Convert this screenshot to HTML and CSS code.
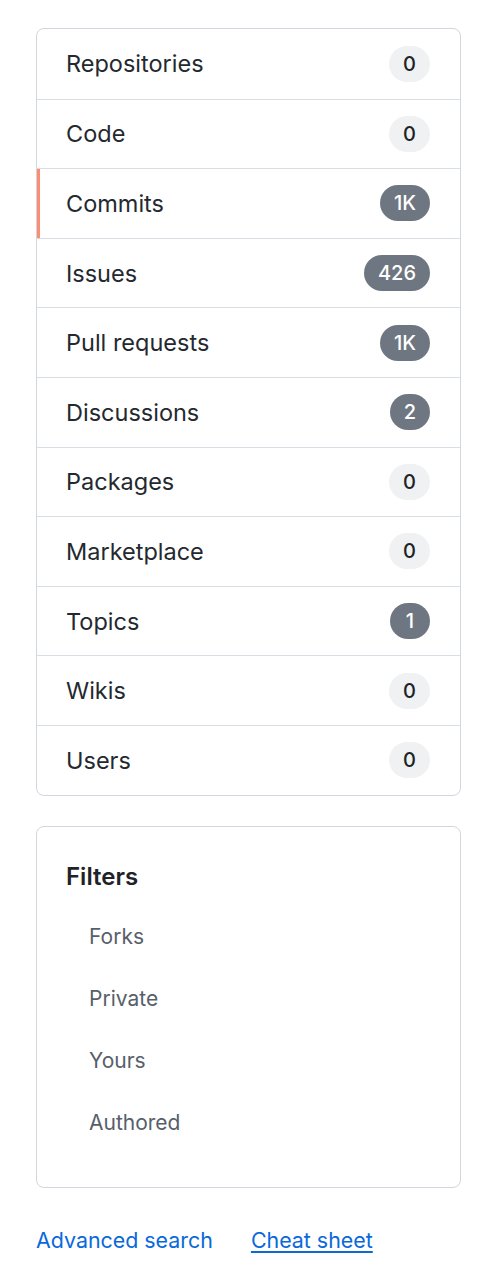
FILE: index.html
```html
<!DOCTYPE html>
<html lang="en">
<head>
    <meta charset="UTF-8" />
    <title>Search filters</title>
    <link rel="stylesheet" href="styles.css">
</head>
<body>
    <nav class="menu">
        <a class="menu-item" href="#">Repositories <span class="counter">0</span></a>
        <a class="menu-item" href="#">Code <span class="counter">0</span></a>
        <a class="menu-item selected" href="#">Commits <span class="counter dark">1K</span></a>
        <a class="menu-item" href="#">Issues <span class="counter dark">426</span></a>
        <a class="menu-item" href="#">Pull requests <span class="counter dark">1K</span></a>
        <a class="menu-item" href="#">Discussions <span class="counter dark">2</span></a>
        <a class="menu-item" href="#">Packages <span class="counter">0</span></a>
        <a class="menu-item" href="#">Marketplace <span class="counter">0</span></a>
        <a class="menu-item" href="#">Topics <span class="counter dark">1</span></a>
        <a class="menu-item" href="#">Wikis <span class="counter">0</span></a>
        <a class="menu-item" href="#">Users <span class="counter">0</span></a>
    </nav>

    <div class="filters">
        <h3>Filters</h3>
        <a class="filter-item" href="#">Forks</a>
        <a class="filter-item" href="#">Private</a>
        <a class="filter-item" href="#">Yours</a>
        <a class="filter-item" href="#">Authored</a>
    </div>

    <div class="links">
        <a href="#">Advanced search</a>
        <a href="#" class="underline">Cheat sheet</a>
    </div>
</body>
</html>
```

FILE: styles.css
```css
body {
    font-family: Inter, "Noto Sans", sans-serif;
    background-color: #fff;
    color: #1f2328;
    margin: 0;
    padding: 28px 17px 0 36px;
    width: 425px;
}

a {
    text-decoration: none;
}

.menu {
    border: 1px solid #d0d7de;
    border-radius: 8px;
    overflow: hidden;
}

.menu-item {
    display: flex;
    align-items: center;
    justify-content: space-between;
    height: 69.6px;
    box-sizing: border-box;
    padding: 0 30px 0 29px;
    font-size: 23.5px;
    color: #24292f;
    border-top: 1px solid #d8dee4;
    position: relative;
}

.menu-item:first-child {
    border-top: none;
}

/* orange marker on the current tab */
.menu-item.selected::before {
    content: "";
    position: absolute;
    left: 0;
    top: 0;
    bottom: 0;
    width: 3px;
    background-color: #fd8c73;
}

.counter {
    display: inline-block;
    min-width: 40px;
    height: 36px;
    line-height: 36px;
    padding: 0 14px;
    box-sizing: border-box;
    border-radius: 18px;
    background-color: #eff1f3;
    color: #1f2328;
    font-size: 20px;
    font-weight: 500;
    text-align: center;
}

.counter.dark {
    background-color: #6e7781;
    color: #fff;
}

.filters {
    margin-top: 30px;
    border: 1px solid #d0d7de;
    border-radius: 8px;
    padding: 35px 30px 33px 29px;
}

.filters h3 {
    margin: 0 0 14px 0;
    font-size: 24px;
    line-height: 30px;
    font-weight: 600;
}

.filter-item {
    display: block;
    padding-left: 23px;
    line-height: 62px;
    font-size: 21px;
    color: #57606a;
}

.links {
    margin-top: 37px;
    display: flex;
    gap: 38px;
    font-size: 21.4px;
    line-height: 30px;
}

.links a {
    color: #0969da;
}

.links a.underline {
    text-decoration: underline;
    text-underline-offset: 3px;
}
```
